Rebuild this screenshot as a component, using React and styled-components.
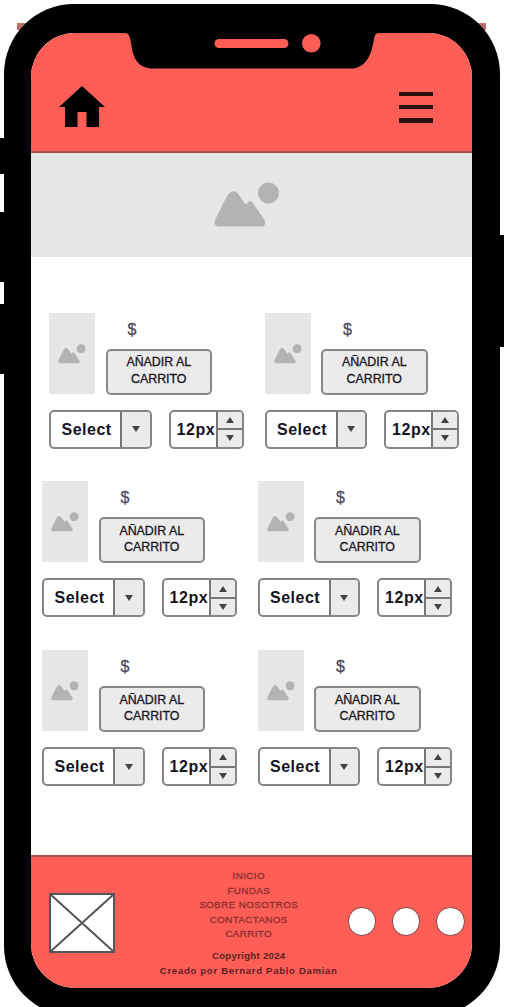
import React from "react";
import styled, { createGlobalStyle } from "styled-components";

const Global = createGlobalStyle`
  html, body { margin: 0; background: #fff; overflow: hidden; }
  #root { height: 1007px; overflow: hidden; }
  * { box-sizing: border-box; }
`;

const coral = "#ff5e57";

const Stage = styled.div`
  position: relative;
  width: 506px;
  height: 1007px;
  overflow: hidden;
  padding: 3.5px 0 0 3.5px;
  font-family: "Liberation Sans", Arial, sans-serif;
`;

const Phone = styled.div`
  position: relative;
  width: 496.5px;
  height: 1012px;
  padding: 29px 28.5px 28px 27px;
  background: #000;
  border-radius: 70px;
`;

const SideKey = styled.div`
  position: absolute;
  ${(p) => p.$side}: ${(p) => (p.$side === "right" ? 2 : 0)}px;
  top: ${(p) => p.$top}px;
  width: 6px;
  height: ${(p) => p.$h}px;
  background: #000;
`;

const Tab = styled.div`
  position: absolute;
  top: 22.5px;
  ${(p) => p.$side}: ${(p) => (p.$side === "right" ? 20 : 17)}px;
  width: 10px;
  height: 7px;
  background: #b9706c;
`;

const Screen = styled.div`
  display: flex;
  flex-direction: column;
  width: 441px;
  height: 955px;
  background: #fff;
  border-radius: 44px;
  overflow: hidden;
`;

const Notch = styled.svg`
  position: absolute;
  left: 120px;
  top: 20px;
  width: 262px;
  height: 46px;
`;

const Header = styled.header`
  display: flex;
  align-items: flex-start;
  justify-content: space-between;
  height: 120.5px;
  padding: 53px 39px 0 27px;
  background: ${coral};
  border-bottom: 2px solid #a84f4b;
`;

const HomeIcon = styled.svg`
  width: 48px;
  height: 42px;
`;

const MenuIcon = styled.div`
  display: flex;
  flex-direction: column;
  gap: 9px;
  margin-top: 6px;
`;

const MenuBar = styled.span`
  width: 33.5px;
  height: 4.4px;
  background: #2b0f0e;
`;

const Banner = styled.div`
  display: flex;
  justify-content: center;
  height: 104px;
  padding: 29px 8px 0 0;
  background: #e6e6e6;
  svg { width: 66px; height: 46px; }
`;

const Products = styled.main`
  flex: 1;
  padding: 55.5px 0 0 11.5px;
`;

const Row = styled.div`
  display: flex;
  gap: 20px;
  height: 168.8px;
  padding-left: ${(p) => (p.$inset ? 7 : 0)}px;
`;

const Card = styled.article`
  width: 195.5px;
  flex: none;
`;

const CardTop = styled.div`
  display: flex;
  gap: 10.5px;
  height: 81px;
`;

const Thumb = styled.div`
  width: 46px;
  height: 81px;
  padding: 31px 0 0 9px;
  background: #e6e6e6;
  svg { display: block; width: 28px; height: 20px; }
`;

const Buy = styled.div`
  width: 106.5px;
`;

const Price = styled.div`
  height: 36px;
  padding: 7px 0 0 22px;
  font-size: 16px;
  line-height: 20px;
  color: #4c4a5c;
  -webkit-text-stroke: 0.3px #4c4a5c;
`;

const AddButton = styled.button`
  display: block;
  width: 106.5px;
  height: 46px;
  padding: 0 0 1px;
  border: 2px solid #878787;
  border-radius: 5px;
  background: #ebebeb;
  font: 12.4px/${(p) => p.$lh}px "Liberation Sans", Arial, sans-serif;
  color: #17131f;
  -webkit-text-stroke: 0.3px #17131f;
`;

const Controls = styled.div`
  display: flex;
  gap: 17px;
  margin-top: 16px;
`;

const Field = styled.div`
  display: flex;
  width: ${(p) => p.$w}px;
  height: 39px;
  border: 2px solid #858585;
  border-radius: 5px;
  background: #fff;
  overflow: hidden;
`;

const Value = styled.div`
  flex: 1;
  min-width: 0;
  padding-left: ${(p) => p.$pad}px;
  font-size: 16px;
  font-weight: 700;
  line-height: 35px;
  letter-spacing: ${(p) => p.$ls}px;
  white-space: nowrap;
  color: #15121f;
`;

const Side = styled.div`
  display: flex;
  flex-direction: column;
  width: ${(p) => p.$w}px;
  border-left: 2px solid #777;
  background: #ebebeb;
`;

const Cell = styled.div`
  flex: 1;
  display: flex;
  align-items: center;
  justify-content: center;
  & + & { border-top: 2px solid #777; }
  svg { display: block; width: 10px; height: 6px; }
`;

const Footer = styled.footer`
  display: grid;
  grid-template-columns: 101px 1fr 117px;
  height: 132.5px;
  padding: 0 7px 0 18.5px;
  background: ${coral};
  border-top: 2.5px solid #a84f4b;
`;

const Logo = styled.svg`
  margin-top: 36px;
  width: 66px;
  height: 60px;
`;

const FooterText = styled.div`
  display: flex;
  flex-direction: column;
  align-items: center;
  padding-top: 12px;
  white-space: nowrap;
`;

const Links = styled.nav`
  display: flex;
  flex-direction: column;
  align-items: center;
  font-size: 9.8px;
  line-height: 14.5px;
  letter-spacing: 0.4px;
  color: #8a2f2e;
  -webkit-text-stroke: 0.3px #8a2f2e;
`;

const Legal = styled.div`
  margin-top: 6px;
  font-size: 9.6px;
  font-weight: 700;
  line-height: 15.5px;
  text-align: center;
  color: #5c1f22;
`;

const LegalLine = styled.div`
  letter-spacing: ${(p) => p.$ls}px;
`;

const Socials = styled.div`
  display: flex;
  justify-content: space-between;
  padding-top: 50px;
`;

const Dot = styled.span`
  width: 28.5px;
  height: 28.5px;
  border: 1.5px solid #7c4341;
  border-radius: 50%;
  background: #fff;
`;

const Picture = () => (
  <svg viewBox="0 0 66 46" fill="#b3b3b3" preserveAspectRatio="none">
    <circle cx="54.500" cy="11" r="10.500" />
    <path d="M4 44.500Q-1 43 1 38L13 14Q19 5 25 13L30.500 21Q32 23 34 20.500Q36 18 38.500 20.500L50.500 38Q52.500 44 48 44.500Z" />
  </svg>
);

const Arrow = ({ up }) => (
  <svg viewBox="0 0 10 6" fill="#444">
    <path d={up ? "M5 0 9 6H1Z" : "M1 0H9L5 6Z"} />
  </svg>
);

const Product = ({ lh }) => (
  <Card>
    <CardTop>
      <Thumb><Picture /></Thumb>
      <Buy>
        <Price>$</Price>
        <AddButton $lh={lh}>AÑADIR AL<br />CARRITO</AddButton>
      </Buy>
    </CardTop>
    <Controls>
      <Field $w={102.5}>
        <Value $pad={10.5} $ls={0.5}>Select</Value>
        <Side $w={29.5}><Cell><Arrow /></Cell></Side>
      </Field>
      <Field $w={75}>
        <Value $pad={6} $ls={0.6}>12px</Value>
        <Side $w={26}>
          <Cell><Arrow up /></Cell>
          <Cell><Arrow /></Cell>
        </Side>
      </Field>
    </Controls>
  </Card>
);

export default function App() {
  return (
    <>
      <Global />
      <Stage>
        <Tab $side="left" />
        <Tab $side="right" />
        <SideKey $side="left" $top={138} $h={36} />
        <SideKey $side="left" $top={212} $h={70} />
        <SideKey $side="left" $top={304} $h={69.5} />
        <SideKey $side="right" $top={235} $h={112} />
        <Phone>
          <Screen>
            <Header>
              <HomeIcon viewBox="0 0 48 42">
                <path d="M24 0 47 21H41V41H28.500V26H19.500V41H7V21H1Z" />
              </HomeIcon>
              <MenuIcon><MenuBar /><MenuBar /><MenuBar /></MenuIcon>
            </Header>
            <Banner><Picture /></Banner>
            <Products>
              <Row $inset><Product lh={17} /><Product lh={17} /></Row>
              <Row><Product lh={15.5} /><Product lh={15.5} /></Row>
              <Row><Product lh={15.5} /><Product lh={15.5} /></Row>
            </Products>
            <Footer>
              <Logo viewBox="0 0 66 60" stroke="#555" strokeWidth="2">
                <rect x="1" y="1" width="64" height="58" fill="#fff" />
                <path d="M1 1 65 59M65 1 1 59" />
              </Logo>
              <FooterText>
                <Links>
                  <span>INICIO</span>
                  <span>FUNDAS</span>
                  <span>SOBRE NOSOTROS</span>
                  <span>CONTACTANOS</span>
                  <span>CARRITO</span>
                </Links>
                <Legal>
                  <LegalLine $ls={0.3}>Copyright 2024</LegalLine>
                  <LegalLine $ls={0.68}>Creado por Bernard Pablo Damian</LegalLine>
                </Legal>
              </FooterText>
              <Socials><Dot /><Dot /><Dot /></Socials>
            </Footer>
          </Screen>
          <Notch viewBox="0 0 262 46">
            <path d="M0 0H262V9H255Q250.500 9 250 15C247 34 241 42 230 44.500H26C14 43 9 34 7.500 22C6 12 5 9 1 9H0Z" />
            <rect x="90.500" y="15" width="74" height="9" rx="4.500" fill={coral} />
            <circle cx="187.300" cy="19.300" r="9.300" fill={coral} />
          </Notch>
        </Phone>
      </Stage>
    </>
  );
}
